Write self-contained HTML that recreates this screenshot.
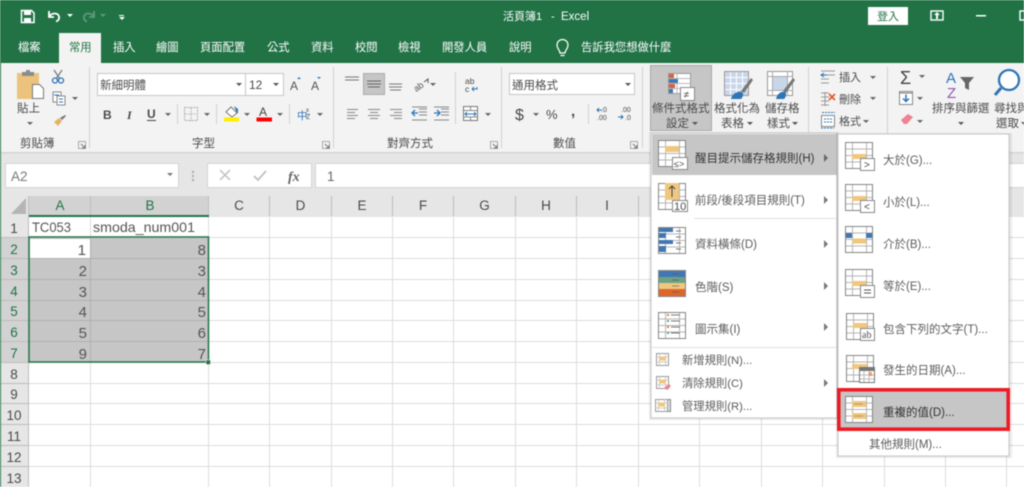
<!DOCTYPE html>
<html lang="zh-Hant"><head><meta charset="utf-8"><title>Excel</title>
<style>
html,body{margin:0;padding:0;width:1024px;height:487px;overflow:hidden;background:#fff}
svg{display:block;position:absolute;left:0;top:0;filter:blur(.4px)}
text{font-family:"Liberation Sans","Noto Sans CJK TC",sans-serif;fill:#4a4a4a;font-size:11.5px}
.w{fill:#fff;font-size:11.3px}
.r{font-size:11.3px}
.c{font-size:14px;fill:#555}
.n{font-size:15px;fill:#555;text-anchor:end}
.h{font-size:13.5px;text-anchor:middle;fill:#4a4a4a}
.g{fill:#217346}
.m{font-size:11.5px;fill:#5c5c5c}
.a{fill:#666}
</style></head><body>
<svg width="1024" height="487" viewBox="0 0 1024 487" xmlns="http://www.w3.org/2000/svg">
<defs>
<g id="tb"><rect x=".5" y=".5" width="27" height="26" fill="#fff" stroke="#858585"/><path d="M.5 7h27M.5 13.500h27M.5 20h27M7.500 .5v26M21.500 .5v26" stroke="#b5b5b5" fill="none"/><rect x=".5" y=".5" width="27" height="26" fill="none" stroke="#858585"/></g>
<g id="sm"><rect x=".5" y=".5" width="12" height="12" fill="#fff" stroke="#999"/><path d="M.5 4h12M.5 9h12M3.500 .5v12M9.500 .5v12" stroke="#ccc"/><rect x="3" y="3.500" width="7" height="4" fill="#f0c77f"/></g>
<path id="ar" d="M0 0h6l-3 3z"/>
<path id="rt" d="M0 0l4 4-4 4z"/>
<g id="lc"><path d="M.5 .5h7v7h-7z" fill="none" stroke="#aaa"/><path d="M3 3l4 4M7 4v3H4" fill="none" stroke="#777"/></g>
</defs>

<!-- title bar -->
<rect width="1024" height="63" fill="#217346"/>
<rect y="63" width="1024" height="89" fill="#f3f3f3"/>
<rect y="152" width="1024" height="335" fill="#e6e6e6"/>
<rect y="152" width="1024" height="1.500" fill="#d4d4d4"/>
<rect x="0" y="63" width="1" height="424" fill="#217346"/>
<!-- QAT -->
<path d="M21.500 10.500h10l2.500 2.500v9.500h-12.500z" fill="none" stroke="#fff" stroke-width="1.500"/><rect x="24" y="11" width="7" height="4" fill="#fff"/><rect x="24" y="18" width="7" height="4" fill="#fff"/>
<path d="M49 11v6h5M49 16.500c3-4 9-4 10 0 .6 2.500-1 4.500-3 5" fill="none" stroke="#fff" stroke-width="1.800"/>
<use href="#ar" x="67" y="14" fill="#fff"/>
<path d="M94 11v6h-5M94 16.500c-3-4-9-4-10 0-.6 2.500 1 4.500 3 5" fill="none" stroke="#5d9a7c" stroke-width="1.800"/>
<use href="#ar" x="100" y="14" fill="#5d9a7c"/>
<rect x="119" y="15" width="5" height="1" fill="#fff"/><use href="#ar" x="119" y="17" fill="#fff"/>
<text x="503" y="20" style="fill:#fff;font-size:11px">活頁簿1</text><text x="551" y="20" style="fill:#fff;font-size:11px">-</text><text x="561" y="20" style="fill:#fff;font-size:11.500px">Excel</text>
<rect x="868" y="7" width="40" height="18" fill="#fff"/><text x="877" y="20" style="fill:#217346;font-size:11px">登入</text>
<rect x="931" y="11" width="12" height="9" fill="none" stroke="#fff" stroke-width="1.400"/><path d="M937 12l3 3h-2v4h-2v-4h-2z" fill="#fff"/>
<rect x="976" y="15" width="10" height="1.500" fill="#fff"/>
<rect x="1020" y="11" width="10" height="9" fill="none" stroke="#fff" stroke-width="1.400"/>
<!-- tabs -->
<rect x="59" y="33" width="42" height="30" fill="#f3f3f3"/>
<text class="w" x="18" y="51">檔案</text><text class="r g" x="69" y="51" style="fill:#217346">常用</text>
<text class="w" x="113" y="51">插入</text><text class="w" x="156" y="51">繪圖</text><text class="w" x="200" y="51">頁面配置</text><text class="w" x="267" y="51">公式</text><text class="w" x="311" y="51">資料</text><text class="w" x="355" y="51">校閱</text><text class="w" x="398" y="51">檢視</text><text class="w" x="442" y="51">開發人員</text><text class="w" x="509" y="51">說明</text><text class="w" x="581" y="51">告訴我您想做什麼</text>
<path d="M560 53c0-3-3-4-3-8a5.500 5.500 0 0 1 11 0c0 4-3 5-3 8zM560.500 55.500h4" fill="none" stroke="#fff" stroke-width="1.200"/>

<!-- separators -->
<path d="M89.500 67v81M333.500 67v81M455.500 72v52M501.500 67v81M642.500 67v81M808.500 67v81M887.500 67v81M177.500 104v20M216.500 104v20M289.500 104v20M588.500 104v20" stroke="#d0d0d0"/>
<!-- clipboard -->
<rect x="17" y="73" width="22" height="26" fill="#ebc37c"/><rect x="22" y="72" width="12" height="4" fill="#8b8b8b"/><rect x="26" y="70" width="4" height="3" fill="#8b8b8b"/>
<path d="M32.500 84.500h7l4 4v10h-11z" fill="#fff" stroke="#777"/>
<text x="17" y="112" style="font-size:11.500px">貼上</text><use href="#ar" x="27" y="122" fill="#666"/>
<path d="M54 70l6 9M62 70l-6 9" stroke="#777" stroke-width="1.200"/><circle cx="55" cy="80.500" r="2.500" fill="none" stroke="#2e75b6" stroke-width="1.300"/><circle cx="61" cy="80.500" r="2.500" fill="none" stroke="#2e75b6" stroke-width="1.300"/>
<rect x="53" y="92" width="8" height="10" fill="#fff" stroke="#888"/><rect x="57" y="96" width="8" height="9" fill="#fff" stroke="#888"/><path d="M54 95h5M59 99h4M59 102h4" stroke="#2e75b6"/>
<use href="#ar" x="72" y="97" fill="#666"/>
<path d="M54 122l5-4 3 3-4 5z" fill="#e6b365"/><path d="M60 118l5-3 1 1-4 4z" fill="#777"/>
<text class="r" x="20" y="147" style="font-size:11.500px">剪貼簿</text><use href="#lc" x="78" y="141"/>
<!-- font -->
<rect x="97.500" y="73.500" width="186" height="22" fill="#fff" stroke="#c6c6c6"/><path d="M245.500 74v21" stroke="#c6c6c6"/>
<text x="100" y="89" style="font-size:11.500px">新細明體</text><use href="#ar" x="236" y="83" fill="#555"/>
<text x="249" y="89" style="font-size:12px">12</text><use href="#ar" x="273" y="83" fill="#555"/>
<text x="290" y="90" style="font-size:12px;fill:#555">A</text><path d="M297 79l2-2 2 2z" fill="#2e75b6"/>
<text x="311" y="90" style="font-size:12px;fill:#555">A</text><path d="M317 77h4l-2 2z" fill="#2e75b6"/>
<text x="103" y="119" style="font-size:12px;font-weight:bold">B</text><text x="127" y="119" style="font-size:12px;font-style:italic;font-family:'Liberation Serif',serif;font-weight:bold">I</text><text x="147" y="118" style="font-size:12px;font-weight:bold">U</text><rect x="147" y="120" width="9" height="1" fill="#444"/>
<use href="#ar" x="165" y="113" fill="#666"/>
<rect x="184.500" y="107.500" width="13" height="13" fill="none" stroke="#aaa" stroke-dasharray="2 1"/><path d="M191 108v13M185 114h13" stroke="#bbb" stroke-dasharray="2 1"/>
<use href="#ar" x="204" y="113" fill="#666"/>
<path d="M226 112l5-5 6 6-5 4z" fill="#fff" stroke="#777"/><path d="M234 106l4 3 0 4-1 0z" fill="#2e75b6"/><rect x="224" y="117.500" width="15" height="4" fill="#ffee00"/>
<use href="#ar" x="244" y="113" fill="#666"/>
<text x="259" y="116" style="font-size:12px;fill:#444">A</text><rect x="256.500" y="117.500" width="15.500" height="4" fill="#f00"/>
<use href="#ar" x="277" y="113" fill="#666"/>
<text x="297" y="119" style="font-size:10.500px;fill:#2e75b6">中</text><text x="306" y="112" style="font-size:6px">x</text><text x="306" y="119" style="font-size:7px">Z</text>
<use href="#ar" x="317" y="113" fill="#666"/>
<text class="r" x="192" y="147" style="font-size:11.500px">字型</text><use href="#lc" x="322" y="141"/>
<!-- alignment -->
<path d="M345 77h14M345 80h14" stroke="#777"/>
<rect x="363.500" y="73.500" width="21" height="21" fill="#c6c6c6" stroke="#ababab"/>
<path d="M367 81h14M367 84h14M368 87h12" stroke="#666"/>
<path d="M389 84h13M389 87h13M390 90h11" stroke="#777"/>
<text x="413" y="90" transform="rotate(-35 418 86)" style="font-size:9px;fill:#555">ab</text><path d="M424 82l4-3v4" fill="none" stroke="#555"/>
<use href="#ar" x="430" y="83" fill="#666"/>
<text x="465" y="84" style="font-size:8.500px">ab</text><text x="465" y="92" style="font-size:8.500px">c</text><path d="M472 89h5v-2M472 89l2-2M472 89l2 2" fill="none" stroke="#2e75b6"/>
<path d="M347 110h11M347 113h8M347 116h11M347 119h8" stroke="#888" transform="translate(0 -.5)"/>
<path d="M368 110h12M370 113h8M368 116h12M370 119h8" stroke="#888" transform="translate(0 -.5)"/>
<path d="M390 110h12M394 113h8M390 116h12M394 119h8" stroke="#888" transform="translate(0 -.5)"/>
<path d="M419 109h8M419 112h8M419 115h8M412 120h15M412 107h15" stroke="#888"/><path d="M412 113h6M415 110l-3 3 3 3" fill="none" stroke="#2e75b6" stroke-width="1.300"/>
<path d="M441 109h8M441 112h8M441 115h8M434 120h15M434 107h15" stroke="#888"/><path d="M434 113h6M437 110l3 3-3 3" fill="none" stroke="#2e75b6" stroke-width="1.300"/>
<rect x="463.500" y="106.500" width="14" height="14" fill="#fff" stroke="#777"/><path d="M464 110.500h13M464 117h13M470.500 107v3M470.500 117v3" stroke="#888"/><path d="M465 114h11M467 112l-2 2 2 2M474 112l2 2-2 2" fill="none" stroke="#2e75b6"/>
<use href="#ar" x="485" y="113" fill="#666"/>
<text class="r" x="387" y="147" style="font-size:11.500px">對齊方式</text><use href="#lc" x="490" y="141"/>
<!-- number -->
<rect x="509.500" y="73.500" width="125" height="21" fill="#fff" stroke="#c6c6c6"/>
<text x="512" y="89" style="font-size:11.500px">通用格式</text><use href="#ar" x="625" y="83" fill="#555"/>
<text x="515" y="120" style="font-size:16px">$</text><use href="#ar" x="533" y="113" fill="#666"/>
<text x="546" y="119" style="font-size:13px">%</text><text x="571" y="116" style="font-size:15px;font-weight:bold">,</text>
<text x="601" y="112" style="font-size:7px">.0</text><text x="597" y="120" style="font-size:7px">.00</text><path d="M597 110h5M599 108l-2 2 2 2" fill="none" stroke="#2e75b6"/>
<text x="621" y="112" style="font-size:7px">.00</text><text x="625" y="120" style="font-size:7px">.0</text><path d="M618 117h5M621 115l2 2-2 2" fill="none" stroke="#2e75b6"/>
<text class="r" x="553" y="147" style="font-size:11.500px">數值</text><use href="#lc" x="630" y="141"/>
<!-- conditional formatting -->
<rect x="650.500" y="65.500" width="61" height="65" fill="#c6c6c6" stroke="#a8a8a8"/>
<g transform="translate(668 73)"><rect x=".5" y=".5" width="22" height="20" fill="#fff" stroke="#999"/><path d="M.5 5.500h22M.5 10.500h22M.5 15.500h22M9 .5v20" stroke="#bbb"/><rect x="1" y="1" width="5" height="4" fill="#d7623a"/><rect x="1" y="6" width="9" height="4" fill="#4178b4"/><rect x="1" y="11" width="6" height="4" fill="#d7623a"/><rect x="1" y="16" width="4" height="4" fill="#4178b4"/><rect x="12.500" y="14.500" width="14" height="13" fill="#fff" stroke="#888"/><text x="15.500" y="25" style="font-size:10px">≠</text></g>
<text x="652" y="112" style="font-size:11.500px">條件式格式</text><text x="666" y="127" style="font-size:11.500px">設定</text><use href="#ar" x="692" y="122" fill="#555"/>
<g transform="translate(724 71)"><rect x=".5" y=".5" width="24" height="24" fill="#c8d6e9" stroke="#999"/><path d="M.5 6.500h24M.5 12.500h24M.5 18.500h24M6.500 .5v24M12.500 .5v24M18.500 .5v24" stroke="#fff"/><rect x=".5" y=".5" width="24" height="24" fill="none" stroke="#999"/><path d="M17 20l10-13 2 2-9 13z" fill="#777"/><path d="M7 28c1-5 6-8 11-7 2 2 1 5-1 7z" fill="#2e75b6"/></g>
<text x="714" y="112" style="font-size:11.500px">格式化為</text><text x="721" y="127" style="font-size:11.500px">表格</text><use href="#ar" x="747" y="122" fill="#555"/>
<g transform="translate(767 71)"><rect x=".5" y=".5" width="25" height="24" fill="#fff" stroke="#999"/><path d="M.5 5.500h25M.5 19.500h25M5.500 .5v24M20.500 .5v24" stroke="#aaa"/><rect x="6" y="6" width="14" height="13" fill="#c8d6e9"/><path d="M16 20l10-13 2 2-9 13z" fill="#777"/><path d="M9 28c1-5 5-8 9-7 2 2 1 5-1 7z" fill="#2e75b6"/></g>
<text x="765" y="112" style="font-size:11.500px">儲存格</text><text x="767" y="127" style="font-size:11.500px">樣式</text><use href="#ar" x="792" y="122" fill="#555"/>
<!-- cells -->
<path d="M821 71h14M824 75h11M821 79h8M821 83h8" stroke="#999"/><path d="M821 75h6M824 73l-3 2 3 2" stroke="#2e75b6" fill="none"/>
<text x="839" y="81" style="font-size:11px">插入</text><use href="#ar" x="870" y="76" fill="#666"/>
<path d="M821 93h8M821 97h8M821 101h8M821 105h8M825 92v14" stroke="#999"/><path d="M829 94l6 6M835 94l-6 6" stroke="#e3572c" stroke-width="1.600"/>
<text x="839" y="103" style="font-size:11px">刪除</text><use href="#ar" x="870" y="97" fill="#666"/>
<rect x="821.500" y="115.500" width="13" height="11" fill="#fff" stroke="#888"/><path d="M822 112.500h13M824 119h8M824 122h8M821 128h13" stroke="#2e75b6" stroke-dasharray="2 1"/>
<text x="839" y="125" style="font-size:11px">格式</text><use href="#ar" x="863" y="120" fill="#666"/>
<!-- editing -->
<text x="900" y="84" style="font-size:18px;fill:#444">Σ</text><use href="#ar" x="919" y="75" fill="#666"/>
<rect x="899.500" y="91.500" width="13" height="13" fill="#fff" stroke="#888"/><path d="M900 93h12" stroke="#777"/><path d="M906 94.500v7M903 98.500l3 3 3-3" fill="none" stroke="#2e75b6" stroke-width="1.500"/><use href="#ar" x="917" y="97" fill="#666"/>
<path d="M901 120l7-6 5 3-6 7-3 0z" fill="#ee8193"/><use href="#ar" x="917" y="120" fill="#666"/>
<text x="946" y="83" style="font-size:15px;fill:#2e75b6">A</text><text x="947" y="98" style="font-size:15px;fill:#8e58b6">Z</text>
<path d="M960 77h14l-5 6v7l-4-2v-5z" fill="#666"/>
<text x="932" y="112" style="font-size:11.500px">排序與篩選</text><use href="#ar" x="958" y="122" fill="#555"/>
<circle cx="1009" cy="80" r="10" fill="#fff" stroke="#2e75b6" stroke-width="2.300"/><path d="M1001 88l-6 7" stroke="#2e75b6" stroke-width="3"/>
<text x="994" y="112" style="font-size:11.500px">尋找與</text><text x="996" y="127" style="font-size:11.500px">選取</text><use href="#ar" x="1021" y="122" fill="#555"/>

<!-- formula bar -->
<rect x="5.500" y="163.500" width="173" height="24" fill="#fff" stroke="#d4d4d4"/>
<text x="11" y="181" style="font-size:13.500px;fill:#777">A2</text><use href="#ar" x="167" y="173" fill="#777"/>
<path d="M193 171v2M193 175v2M193 179v2" stroke="#aaa" stroke-width="2"/>
<rect x="207.500" y="163.500" width="104" height="24" fill="#fff" stroke="#d4d4d4"/>
<path d="M220 170l10 10M230 170l-10 10" stroke="#c0c0c0" stroke-width="1.500"/>
<path d="M254 176l4 4 8-9" fill="none" stroke="#c0c0c0" stroke-width="1.800"/>
<text x="288" y="181" style="font-size:14px;font-style:italic;font-family:'Liberation Serif',serif;fill:#666;font-weight:bold">fx</text>
<rect x="315.500" y="163.500" width="720" height="24" fill="#fff" stroke="#d4d4d4"/>
<text x="327" y="181" style="font-size:13.500px;fill:#666">1</text>

<!-- sheet -->
<rect x="29" y="217" width="995" height="270" fill="#fff"/>
<path d="M26 198v16h-15z" fill="#b5b5b5"/>
<rect x="29" y="196" width="180" height="20" fill="#d2d2d2"/>
<path d="M28.500 196v291M90.500 196v20M208.500 196v20M269.500 196v20M331.500 196v20M392.500 196v20M453.500 196v20M515.500 196v20M576.500 196v20M638.500 196v20M699.500 196v20M761.500 196v20M822.500 196v20M884.500 196v20M945.500 196v20M1006.500 196v20" stroke="#bcbcbc" fill="none"/>
<rect x="1" y="238" width="27.500" height="124" fill="#d2d2d2"/>
<path d="M1 237.500h28M1 258.500h28M1 279.500h28M1 300.500h28M1 320.500h28M1 341.500h28M1 362.500h28M1 383.500h28M1 403.500h28M1 424.500h28M1 445.500h28M1 466.500h28" stroke="#bcbcbc"/>
<rect x="29" y="215" width="180" height="2" fill="#217346"/>
<text class="h" x="60" y="210" style="fill:#217346">A</text><text class="h" x="150" y="210" style="fill:#217346">B</text><text class="h" x="239" y="210">C</text><text class="h" x="300.500" y="210">D</text><text class="h" x="362" y="210">E</text><text class="h" x="423" y="210">F</text><text class="h" x="484.500" y="210">G</text><text class="h" x="546" y="210">H</text><text class="h" x="607" y="210">I</text>
<text class="h" x="14" y="233">1</text>
<text class="h" x="14" y="254" style="fill:#217346">2</text><text class="h" x="14" y="275" style="fill:#217346">3</text><text class="h" x="14" y="296" style="fill:#217346">4</text><text class="h" x="14" y="316" style="fill:#217346">5</text><text class="h" x="14" y="337" style="fill:#217346">6</text><text class="h" x="14" y="358" style="fill:#217346">7</text>
<text class="h" x="14" y="379">8</text><text class="h" x="14" y="399">9</text><text class="h" x="14" y="420">10</text><text class="h" x="14" y="441">11</text><text class="h" x="14" y="462">12</text><text class="h" x="14" y="483">13</text>
<path d="M29 237.500h995M29 258.500h995M29 279.500h995M29 300.500h995M29 320.500h995M29 341.500h995M29 362.500h995M29 383.500h995M29 403.500h995M29 424.500h995M29 445.500h995M29 466.500h995M90.500 217v270M208.500 217v270M269.500 217v270M331.500 217v270M392.500 217v270M453.500 217v270M515.500 217v270M576.500 217v270M638.500 217v270M699.500 217v270M761.500 217v270M822.500 217v270M884.500 217v270M945.500 217v270M1006.500 217v270" stroke="#dcdcdc"/>
<!-- selection -->
<rect x="29" y="238" width="180" height="124" fill="#c6c6c6"/>
<rect x="30" y="239" width="60.500" height="19" fill="#fff"/>
<path d="M30 258.500h178M30 279.500h178M30 300.500h178M30 320.500h178M30 341.500h178M90.500 258v104M90.500 238v20" stroke="#b0b0b0"/>
<rect x="29" y="237" width="179.500" height="125" fill="none" stroke="#217346" stroke-width="1.500"/>
<rect x="206" y="360" width="4.500" height="4.500" fill="#217346" stroke="#fff" stroke-width=".5"/>
<text class="c" x="32" y="232" textLength="39" lengthAdjust="spacingAndGlyphs">TC053</text>
<text class="c" x="93" y="232" textLength="102" lengthAdjust="spacingAndGlyphs">smoda_num001</text>
<text class="n" x="86" y="255">1</text><text class="n" x="87" y="276">2</text><text class="n" x="87" y="297">3</text><text class="n" x="87" y="317">4</text><text class="n" x="87" y="338">5</text><text class="n" x="87" y="359">9</text>
<text class="n" x="206" y="255">8</text><text class="n" x="206" y="276">3</text><text class="n" x="206" y="297">4</text><text class="n" x="206" y="317">5</text><text class="n" x="206" y="338">6</text><text class="n" x="206" y="359">7</text>

<!-- menu 1 -->
<rect x="649" y="132" width="190" height="288" fill="#000" opacity=".08"/>
<rect x="651" y="133" width="186" height="285" fill="#fff" stroke="#c6c6c6"/>
<rect x="652" y="134" width="185" height="41" fill="#c6c6c6"/>
<use href="#tb" x="658" y="140"/><rect x="665" y="146" width="14" height="6" fill="#f0c77f"/>
<rect x="672.500" y="157.500" width="15" height="12" fill="#fff" stroke="#888"/><text x="674" y="167" style="font-size:9px">≤&gt;</text>
<text x="695" y="162" style="font-size:11.500px;fill:#333">醒目提示儲存格規則(H)</text><use href="#rt" x="824" y="154" fill="#666"/>
<use href="#tb" x="658" y="183"/><rect x="665" y="183" width="14" height="17" fill="#f0c77f"/><path d="M672 186v11M669 189l3-3 3 3" fill="none" stroke="#444"/>
<rect x="672.500" y="200.500" width="15" height="11" fill="#fff" stroke="#888"/><text x="674" y="210" style="font-size:11px">10</text>
<text class="m" x="695" y="204">前段/後段項目規則(T)</text><use href="#rt" x="824" y="196" fill="#777"/>
<path d="M694 218.500h142" stroke="#e0e0e0"/>
<use href="#tb" x="658" y="227"/><path d="M659 228h14v4h-14zM659 233h7v5h-7zM659 240h14v4h-14zM659 246h7v6h-7z" fill="#4178b4"/><path d="M676 231h5M676 237h5M676 243h5M676 249h5" stroke="#777"/>
<text class="m" x="695" y="248">資料橫條(D)</text><use href="#rt" x="824" y="240" fill="#777"/>
<use href="#tb" x="658" y="270"/><rect x="659" y="271" width="26" height="6" fill="#4178b4"/><rect x="659" y="277" width="26" height="6" fill="#6aa284"/><rect x="659" y="283" width="26" height="6" fill="#f0c77f"/><rect x="659" y="289" width="26" height="7" fill="#e0652a"/><path d="M672 274h7M672 280h7M672 286h7M672 292h7" stroke="#555" opacity=".6"/>
<text class="m" x="695" y="291">色階(S)</text><use href="#rt" x="824" y="282" fill="#777"/>
<use href="#tb" x="658" y="312"/><path d="M667 315h2M667 327h2" stroke="#ed7d31" stroke-width="2"/><path d="M667 321h2M667 333h2" stroke="#6aa284" stroke-width="2"/><path d="M671 315h9M671 321h9M671 327h9M671 333h9" stroke="#777"/>
<text class="m" x="695" y="333">圖示集(I)</text><use href="#rt" x="824" y="323" fill="#777"/>
<path d="M652 347.500h184" stroke="#e0e0e0"/>
<use href="#sm" x="656" y="353"/><text class="m" x="682" y="364" style="font-size:11.300px">新增規則(N)...</text>
<use href="#sm" x="656" y="376"/><path d="M664 388l5-4 2 2-4 4z" fill="#ee8193"/><text class="m" x="682" y="387" style="font-size:11.300px">清除規則(C)</text><use href="#rt" x="824" y="379" fill="#777"/>
<rect x="656.500" y="399.500" width="14" height="12" fill="#ddd" stroke="#888"/><use href="#sm" x="655" y="399"/><text class="m" x="682" y="410" style="font-size:11.300px">管理規則(R)...</text>

<!-- menu 2 -->
<rect x="836" y="133" width="176" height="325" fill="#000" opacity=".08"/>
<rect x="838" y="134" width="171" height="322" fill="#fff" stroke="#c6c6c6"/>
<use href="#tb" x="845" y="142"/><rect x="852" y="154" width="14" height="5" fill="#f0c77f"/><rect x="860.500" y="158.500" width="14" height="12" fill="#fff" stroke="#888"/><text x="864" y="168" style="font-size:10px">&gt;</text>
<text class="m" x="883" y="164">大於(G)...</text>
<use href="#tb" x="845" y="184"/><rect x="852" y="196" width="14" height="5" fill="#f0c77f"/><rect x="860.500" y="200.500" width="14" height="12" fill="#fff" stroke="#888"/><text x="864" y="210" style="font-size:10px">&lt;</text>
<text class="m" x="883" y="206">小於(L)...</text>
<use href="#tb" x="845" y="226"/><rect x="846" y="233" width="6" height="5" fill="#4178b4"/><rect x="866" y="233" width="6" height="5" fill="#4178b4"/><rect x="852" y="238.500" width="14" height="5" fill="#f0c77f"/>
<text class="m" x="883" y="248">介於(B)...</text>
<use href="#tb" x="845" y="269"/><rect x="852" y="281" width="14" height="5" fill="#f0c77f"/><rect x="860.500" y="285.500" width="14" height="12" fill="#fff" stroke="#888"/><path d="M864 290h7M864 293h7" stroke="#555"/>
<text class="m" x="883" y="290">等於(E)...</text>
<use href="#tb" x="846" y="313"/><rect x="853" y="323" width="14" height="5" fill="#f0c77f"/><rect x="860.500" y="328.500" width="14" height="12" fill="#fff" stroke="#888"/><text x="862" y="338" style="font-size:10px;font-family:'Liberation Serif',serif">ab</text>
<text class="m" x="883" y="333">包含下列的文字(T)...</text>
<use href="#tb" x="846" y="355"/><rect x="852" y="364" width="15" height="5" fill="#f0c77f"/><rect x="859.500" y="367.500" width="15" height="15" fill="#fff" stroke="#777"/><rect x="860" y="368" width="14" height="3" fill="#777"/><path d="M860 375h14M860 379h14M864 371v11M869 371v11" stroke="#bbb"/><rect x="869" y="372" width="3" height="4" fill="#ed7d31" opacity=".7"/>
<text class="m" x="883" y="374">發生的日期(A)...</text>
<rect x="838.800" y="389.800" width="169.400" height="39.400" fill="#c6c6c6" stroke="#ed1c24" stroke-width="3.600"/>
<use href="#tb" x="845" y="396"/><rect x="852" y="401" width="14" height="6" fill="#f0c77f"/><rect x="852" y="413" width="14" height="6" fill="#f0c77f"/><path d="M854 404h9M854 416h9" stroke="#b49b6e"/>
<text x="883" y="416" style="font-size:11.500px;fill:#333">重複的值(D)...</text>
<text class="m" x="869" y="448">其他規則(M)...</text>
</svg>
</body></html>
